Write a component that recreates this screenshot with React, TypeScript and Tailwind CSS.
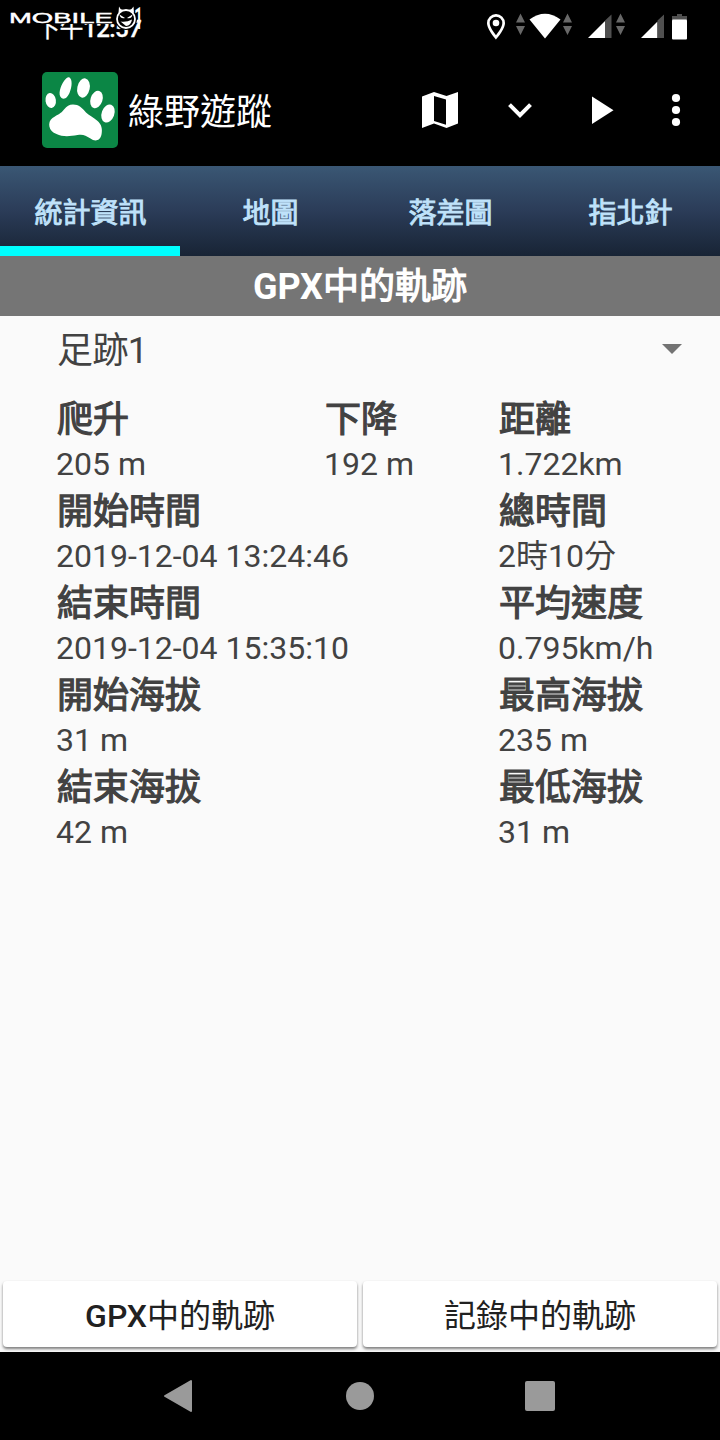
const tabs = ["統計資訊", "地圖", "落差圖", "指北針"];

const stats = [
  [
    { label: "開始時間", value: "2019-12-04 13:24:46" },
    { label: "總時間", value: "2時10分" },
  ],
  [
    { label: "結束時間", value: "2019-12-04 15:35:10" },
    { label: "平均速度", value: "0.795km/h" },
  ],
  [
    { label: "開始海拔", value: "31 m" },
    { label: "最高海拔", value: "235 m" },
  ],
  [
    { label: "結束海拔", value: "42 m" },
    { label: "最低海拔", value: "31 m" },
  ],
];

function Stat({ label, value }: { label: string; value: string }) {
  return (
    <div className="whitespace-nowrap">
      <div className="h-[46px] pl-px text-[36px] leading-[50px] [-webkit-text-stroke:1.2px_#424242]">
        {label}
      </div>
      <div className="h-[46px] text-[32px] leading-[46px]">{value}</div>
    </div>
  );
}

function Watermark() {
  return (
    <div className="absolute left-0 top-0 h-8 w-[150px]">
      <div className="absolute left-[10px] top-[7px] h-[17px] w-[106px] bg-black" />
      <span className="absolute left-[9px] top-[10px] origin-left scale-x-[1.96] font-['Liberation_Sans'] text-[14px] leading-4 text-white [-webkit-text-stroke:0.4px_white]">
        MOBILE
      </span>
      <svg
        className="absolute left-[114px] top-[5px]"
        width="24"
        height="25"
        viewBox="0 0 24 25"
      >
        <circle cx="12" cy="14" r="11" fill="black" />
        <path d="M4.500 8 5 1.500q1 3 4 3.500M15 5q3-.5 4.500-3.500l.5 6.500" fill="white" />
        <circle
          cx="12"
          cy="14"
          r="9"
          fill="black"
          stroke="white"
          strokeWidth="1.8"
        />
        <path
          d="M5.500 9.500 11 13q-5 1-5.500-3.500M18.500 9.500 13 13q5 1 5.500-3.500M6.500 16.500q6 1 11.500-2-1 6-6 6.500z"
          fill="white"
        />
      </svg>
      <span className="absolute left-[134px] top-[3px] origin-left scale-x-[0.5] font-[Roboto] text-[32px] font-medium leading-[30px] text-white">
        1
      </span>
    </div>
  );
}

function StatusBar() {
  return (
    <div className="relative h-[54px]">
      <div className="pl-[36px] pt-[14px] text-[24px] leading-[30px] tracking-[-0.5px] text-white [-webkit-text-stroke:0.3px_white]">
        下午<span className="font-medium">12:57</span>
      </div>
      <Watermark />
      <svg
        className="absolute left-[480px] top-0"
        width="240"
        height="54"
        viewBox="480 0 240 54"
        fill="white"
      >
        <path
          fillRule="evenodd"
          d="M496 14a9 9 0 0 0-9 9c0 6.500 9 16.500 9 16.500s9-10 9-16.500a9 9 0 0 0-9-9m0 2.700a6.300 6.300 0 0 1 6.300 6.300c0 3.500-3.500 8.800-6.300 12.200-2.800-3.400-6.300-8.700-6.300-12.200a6.300 6.300 0 0 1 6.300-6.300"
        />
        <circle cx="496" cy="23" r="3.300" />
        <path d="M529.500 19.500q15.500-11.500 31 0L545 38.500z" />
        <g fill="#686868">
          <path d="m516 22.500 4.500-9 4.500 9zM516 26l4.500 9 4.500-9z" />
          <path d="m563 22.500 4.500-9 4.500 9zM563 26l4.500 9 4.500-9z" />
          <path d="m616 22.500 4.500-9 4.500 9zM616 26l4.500 9 4.500-9z" />
        </g>
        <path d="M605 20v18h-17l17-17zM657.500 20v18H641l16.500-16.500z" />
        <path d="M605 38V20.500l6.500-6V38zM657.500 38V20.500l6.500-6V38z" fill="#505050" />
        <path d="M677 14h5v2h5v4h-15v-4h5z" fill="#505050" />
        <rect x="672" y="19.500" width="15" height="20" rx="1" />
      </svg>
    </div>
  );
}

function Toolbar() {
  return (
    <div className="flex h-28 items-center pl-[42px]">
      <svg width="76" height="76" viewBox="0 0 76 76">
        <rect width="76" height="76" rx="5" fill="#0b8645" />
        <g fill="white">
          <ellipse cx="8.700" cy="28.500" rx="5.200" ry="7.500" transform="rotate(-8 8.700 28.500)" />
          <path d="M27.500 5.500c3 2 2.500 9 .5 14-2 6-5.500 8.500-8.500 6.500-4-3-1-12 2.500-17 2-2.500 4-4.500 5.500-3.500" />
          <ellipse cx="41.500" cy="16" rx="6.200" ry="9.800" transform="rotate(12 41.500 16)" />
          <ellipse cx="54.500" cy="27.500" rx="6" ry="9" transform="rotate(18 54.500 27.500)" />
          <ellipse cx="66" cy="41.500" rx="6.300" ry="9.300" transform="rotate(20 66 41.500)" />
          <path d="M31 32.500c6 0 9 3.500 13 8 3 3 7 4.500 11 8 5 4 5.500 9 4.500 14-1.500 7-7 7-11 4-5-3.500-8-4.500-13-3.500-8 1.500-15 2-21-1C6.500 59.500 5 50 10.500 46c6-4 8-4 11.500-8.500 3-3.500 5-5 9-5" />
        </g>
      </svg>
      <span className="flex-1 pl-[10px] pt-1.5 text-[36px] leading-[54px] text-white">
        綠野遊蹤
      </span>
      <svg width="300" height="80" viewBox="420 70 300 80" fill="white">
        <path
          fillRule="evenodd"
          d="m422 96.500 12-4.500 12.500 4 11.500-4v31.500l-11.500 4.500-12.500-4.500-12 4.500zM434 96v25l12 3.800V99.500z"
        />
        <path
          d="m509.500 104.700 10.500 10.500 10.500-10.500"
          fill="none"
          stroke="white"
          strokeWidth="4"
        />
        <path d="M592 96.500v27.500l21.500-13.700z" />
        <circle cx="676" cy="98" r="4.100" />
        <circle cx="676" cy="110" r="4.100" />
        <circle cx="676" cy="122" r="4.100" />
      </svg>
    </div>
  );
}

export default function App() {
  return (
    <div className="flex h-[1440px] w-[720px] flex-col overflow-hidden bg-[#fafafa] font-[Roboto,'Noto_Sans_CJK_TC',sans-serif] text-[#424242]">
      <header className="bg-black">
        <StatusBar />
        <Toolbar />
      </header>

      <nav className="grid h-[90px] grid-cols-4 bg-linear-to-b from-[#3a5774] via-[#2b3c58] to-[#182435] text-[28px] text-[#bfe2fa]">
        {tabs.map((tab, i) => (
          <div
            key={tab}
            className={
              i === 0
                ? "flex items-center justify-center border-b-10 border-[#00ffff] pl-px pt-[15px] [-webkit-text-stroke:0.9px_#bfe2fa]"
                : "flex items-center justify-center pl-px pt-[5px] [-webkit-text-stroke:0.9px_#bfe2fa]"
            }
          >
            {tab}
          </div>
        ))}
      </nav>

      <div className="h-[60px] bg-[#757575] text-center text-[36px] leading-[63px] text-white">
        <span className="font-bold">GPX</span>
        <span className="[-webkit-text-stroke:1.2px_white]">中的軌跡</span>
      </div>

      <main className="flex-1">
        <div className="flex h-[79px] items-center justify-between pb-3 pl-[57px] pr-[38px] text-[36px]">
          <span className="pt-0.5 tracking-[-0.6px]">足跡1</span>
          <svg className="mb-0.5" width="20" height="10" viewBox="0 0 20 10">
            <path d="M0 0h20L10 10z" fill="#737373" />
          </svg>
        </div>

        <div className="pl-[56px]">
          <div className="grid grid-cols-[268px_174px_1fr]">
            <Stat label="爬升" value="205 m" />
            <Stat label="下降" value="192 m" />
            <Stat label="距離" value="1.722km" />
          </div>
          {stats.map((row) => (
            <div key={row[0].label} className="grid grid-cols-[442px_1fr]">
              {row.map((item) => (
                <Stat key={item.label} {...item} />
              ))}
            </div>
          ))}
        </div>
      </main>

      <div className="grid h-[71px] grid-cols-2 gap-1.5 px-[3px] pb-[5px] text-[32px] text-[#212121]">
        <button className="rounded bg-white pt-[3px] shadow-[0_2px_3px_rgba(0,0,0,0.5)]">
          <span className="font-medium">GPX</span>中的軌跡
        </button>
        <button className="rounded bg-white pt-[3px] shadow-[0_2px_3px_rgba(0,0,0,0.5)]">
          記錄中的軌跡
        </button>
      </div>

      <footer className="flex h-[88px] items-center bg-black">
        <svg width="720" height="88" viewBox="0 0 720 88" fill="#9a9a9a">
          <path
            d="M165 44 191 29v30z"
            stroke="#9a9a9a"
            strokeWidth="2"
            strokeLinejoin="round"
          />
          <circle cx="360" cy="44" r="14" />
          <rect x="525" y="29" width="30" height="30" rx="2" />
        </svg>
      </footer>
    </div>
  );
}
